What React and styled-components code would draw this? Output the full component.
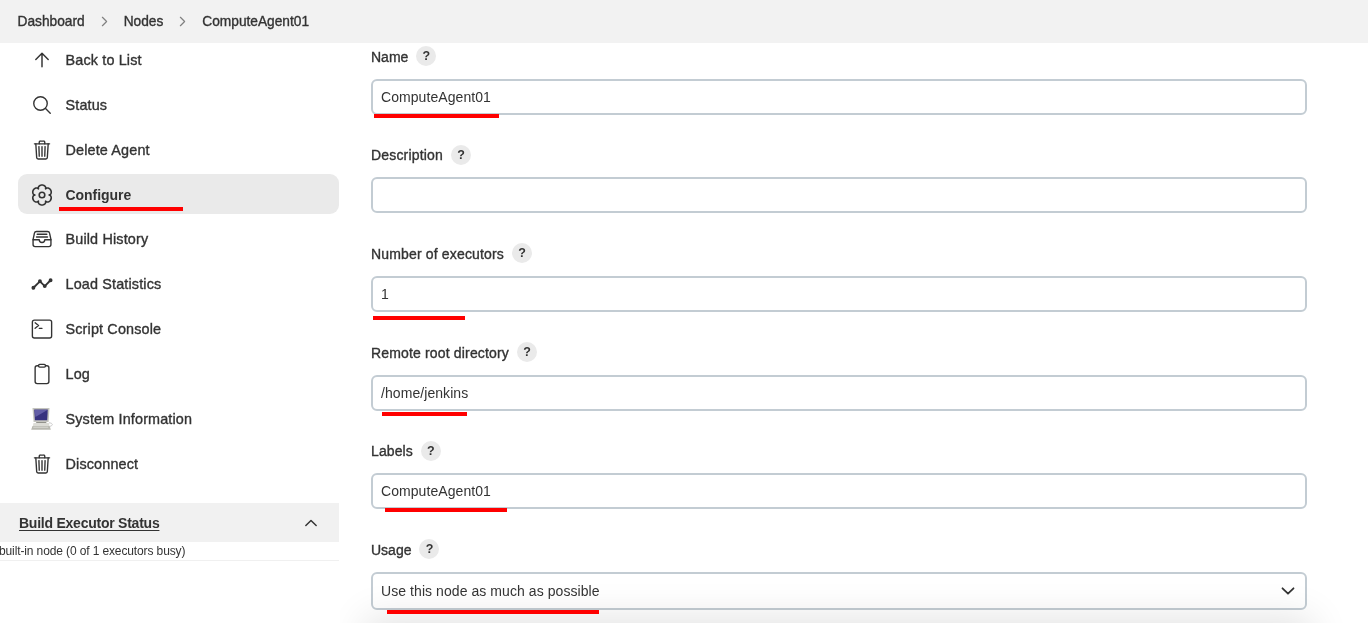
import React from 'react';
import styled, { createGlobalStyle } from 'styled-components';
import {
  IoArrowUpOutline,
  IoSearchOutline,
  IoTrashOutline,
  IoFileTrayFullOutline,
  IoAnalyticsOutline,
  IoTerminalOutline,
  IoClipboardOutline,
  IoChevronForwardOutline,
} from 'react-icons/io5';

const Global = createGlobalStyle`
  * { box-sizing: border-box; }
  body {
    margin: 0;
    background: #fff;
    color: #333;
    font: 14px/20px "Liberation Sans", Arial, sans-serif;
    overflow: hidden;
  }
`;

const Page = styled.div`
  position: relative;
  height: 633px;
  display: flex;
  flex-direction: column;
  overflow: hidden;
`;

const Medium = styled.span`
  -webkit-text-stroke: 0.35px currentColor;
  letter-spacing: ${(p) => p.$spacing || 0}px;
  white-space: nowrap;
`;

const Breadcrumbs = styled.nav`
  flex: none;
  height: 43px;
  background: #f2f2f2;
  display: flex;
  align-items: center;
  padding: 0 17.5px;
  font-size: 13.72px;
`;

const Separator = styled(IoChevronForwardOutline)`
  width: 15px;
  height: 15px;
  margin: 0 12px;
  color: #808080;
  path { stroke-width: 40px; }
`;

const Body = styled.div`
  flex: 1;
  display: flex;
  min-height: 0;
`;

const Side = styled.aside`
  width: 340px;
  flex: none;
`;

const Tasks = styled.div`
  display: flex;
  flex-direction: column;
  gap: 4.9px;
  margin-top: -3.6px;
  padding: 0 1px 0 18px;
`;

const Task = styled.a`
  display: flex;
  align-items: center;
  gap: 12.5px;
  height: 40px;
  padding: 1px 13px 0;
  border-radius: 9px;
  font-size: ${(p) => (p.$active ? 14 : 14.4)}px;
  font-weight: ${(p) => (p.$active ? 700 : 400)};
  background: ${(p) => (p.$active ? '#eaeaea' : 'transparent')};
  svg { width: 22px; height: 22px; flex: none; }
`;

const Label = styled.span`
  position: relative;
  white-space: nowrap;
  letter-spacing: ${(p) => (p.$active ? -0.04 : 0.15)}px;
  -webkit-text-stroke: ${(p) => (p.$active ? 0 : 0.35)}px currentColor;
`;

const Mark = styled.i`
  position: absolute;
  left: ${(p) => p.$x}px;
  top: ${(p) => p.$y}px;
  width: ${(p) => p.$w}px;
  height: 4px;
  background: #f00;
  z-index: 3;
`;

const Pane = styled.div`
  margin-top: 19.5px;
  width: 339px;
`;

const PaneHead = styled.div`
  height: 39px;
  background: #f1f1f1;
  display: flex;
  align-items: center;
  justify-content: space-between;
  padding: 1px 22px 0 19px;
  font-size: 14px;
  letter-spacing: -0.24px;
  font-weight: 700;
  a { text-decoration: underline; text-underline-offset: 2px; text-decoration-thickness: 1px; }
`;

const PaneRow = styled.div`
  height: 19px;
  line-height: 19px;
  font-size: 12px;
  letter-spacing: -0.12px;
  margin-left: -1px;
  border-bottom: 1px solid #f0f0f0;
`;

const Form = styled.main`
  width: 936px;
  margin-left: 31px;
  padding-top: 3px;
`;

const Field = styled.div`
  position: relative;
  height: ${(p) => p.$h}px;
`;

const FieldLabel = styled.div`
  display: flex;
  align-items: center;
  gap: 8px;
  height: 20px;
  margin-bottom: 13px;
  > span:first-child { padding-top: 2px; }
`;

const Help = styled.span`
  width: 20px;
  height: 20px;
  margin-bottom: ${(p) => (p.$low ? -2 : 0)}px;
  border-radius: 50%;
  background: #eaeaea;
  text-align: center;
  font-size: 12.5px;
  font-weight: 700;
`;

const Input = styled.div`
  height: ${(p) => (p.$select ? 38 : 36)}px;
  border: 2px solid #c3ccd3;
  border-radius: 6px;
  background: #fff;
  display: flex;
  align-items: center;
  justify-content: space-between;
  padding: 0 10px 0 8px;
  letter-spacing: 0.07px;
`;

const BottomBar = styled.div`
  position: absolute;
  left: 371px;
  top: 623px;
  width: 936px;
  height: 60px;
  background: #fff;
`;

const Shade = styled.div`
  position: absolute;
  left: 340px;
  top: 583px;
  width: 1010px;
  height: 40px;
  overflow: hidden;
  mix-blend-mode: multiply;
  pointer-events: none;
  &::before {
    content: '';
    position: absolute;
    left: 31px;
    top: 40px;
    width: 936px;
    height: 60px;
    box-shadow: 0 0 38px 6px rgba(0, 0, 0, 0.11);
  }
`;

const ArrowUp = styled(IoArrowUpOutline)`
  path { stroke-width: 34px; }
`;

const Analytics = styled(IoAnalyticsOutline)`
  path, circle { stroke-width: 42px; }
`;

const gearPoints = Array.from({ length: 96 }, (_, i) => {
  const a = (i / 96) * Math.PI * 2;
  const r = 7.1 + 2.9 * Math.pow(Math.abs(Math.cos(3 * a)), 0.5);
  return `${(11 + r * Math.sin(a)).toFixed(2)},${(11 - r * Math.cos(a)).toFixed(2)}`;
}).join(' ');

const Gear = () => (
  <svg viewBox="0 0 22 22" fill="none" stroke="#333" strokeWidth="1.6" strokeLinejoin="round">
    <polygon points={gearPoints} />
    <circle cx="11" cy="11" r="2.8" />
  </svg>
);

const Chevron = ({ up }) => (
  <svg width={up ? 12 : 14} height={up ? 8 : 9} viewBox="0 0 14 9" fill="none" stroke="#333" strokeWidth={up ? 1.7 : 1.8} strokeLinecap="round" strokeLinejoin="round">
    <path d={up ? 'M1 7.5 7 1.5l6 6' : 'M1.5 1.3 7 6.7l5.5-5.4'} />
  </svg>
);

const Computer = () => (
  <svg viewBox="0 0 22 22">
    <path d="M1.5 0h17l-.9 14H2.6z" fill="#c4c4be" />
    <path d="M3.2 1.5h13.6l-.6 10.8H3.9z" fill="#37327f" />
    <path d="M3.6 1.9h12.8L4.4 9z" fill="#625da6" />
    <path d="M5.5 14h9.5l1 1.5H4.5z" fill="#92928c" />
    <path d="M2.5 15h15.3l.8 3H1.8z" fill="#dcdcd6" />
    <path d="M1.5 18h17.2l1.1 3.8H.2z" fill="#b8b8b0" />
    <path d="M2.3 19.2h15" stroke="#e5e5df" strokeWidth=".8" />
    <path d="M18 14.8c4.4.3 4.2 2.9.8 3.6" fill="none" stroke="#cacaca" />
  </svg>
);

const tasks = [
  ['Back to List', ArrowUp],
  ['Status', IoSearchOutline],
  ['Delete Agent', IoTrashOutline],
  ['Configure', Gear, true],
  ['Build History', IoFileTrayFullOutline],
  ['Load Statistics', Analytics],
  ['Script Console', IoTerminalOutline],
  ['Log', IoClipboardOutline],
  ['System Information', Computer],
  ['Disconnect', IoTrashOutline],
];

const fields = [
  { label: 'Name', value: 'ComputeAgent01', h: 98, mark: [3, 68, 125] },
  { label: 'Description', value: '', h: 99, spacing: 0.18, low: true },
  { label: 'Number of executors', value: '1', h: 99, spacing: 0.16, mark: [2, 73, 92] },
  { label: 'Remote root directory', value: '/home/jenkins', h: 98, spacing: 0.16, mark: [11, 70, 85] },
  { label: 'Labels', value: 'ComputeAgent01', h: 99, spacing: 0.1, low: true, mark: [14, 68, 122] },
  { label: 'Usage', value: 'Use this node as much as possible', h: 99, mark: [16, 71, 212], select: true },
];

export default function App() {
  return (
    <Page>
      <Global />
      <Breadcrumbs>
        <Medium>Dashboard</Medium>
        <Separator />
        <Medium>Nodes</Medium>
        <Separator />
        <Medium>ComputeAgent01</Medium>
      </Breadcrumbs>
      <Body>
        <Side>
          <Tasks>
            {tasks.map(([text, Icon, active]) => (
              <Task key={text} $active={active}>
                <Icon />
                <Label $active={active}>
                  {text}
                  {active && <Mark $x={-6.5} $y={22} $w={124} />}
                </Label>
              </Task>
            ))}
          </Tasks>
          <Pane>
            <PaneHead>
              <a>Build Executor Status</a>
              <Chevron up />
            </PaneHead>
            <PaneRow>built-in node (0 of 1 executors busy)</PaneRow>
          </Pane>
        </Side>
        <Form>
          {fields.map((f) => (
            <Field key={f.label} $h={f.h}>
              <FieldLabel>
                <Medium $spacing={f.spacing}>{f.label}</Medium>
                <Help $low={f.low}>?</Help>
              </FieldLabel>
              <Input $select={f.select}>
                <span>{f.value}</span>
                {f.select && <Chevron />}
              </Input>
              {f.mark && <Mark $x={f.mark[0]} $y={f.mark[1]} $w={f.mark[2]} />}
            </Field>
          ))}
        </Form>
      </Body>
      <Shade />
      <BottomBar />
    </Page>
  );
}
